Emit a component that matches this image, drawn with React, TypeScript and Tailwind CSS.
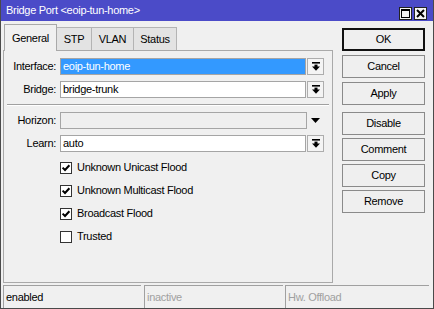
import React from "react";

const DropIcon = () => (
  <svg width="8" height="9" viewBox="0 0 8 9">
    <rect x="0" y="0" width="8" height="1.6" fill="#000" />
    <rect x="2.5" y="2.6" width="3" height="2.4" fill="#000" />
    <path d="M0 4.6 H8 L4 8.8 Z" fill="#000" />
  </svg>
);

const Check = () => (
  <svg width="10" height="10" viewBox="0 0 10 10">
    <path d="M1.6 4.6 L4 7 L8.4 2.2" stroke="#000" strokeWidth="2" fill="none" />
  </svg>
);

function Row({ label, children }: { label: string; children: React.ReactNode }) {
  return (
    <div className="flex items-center h-[17px]">
      <div className="w-[52px] text-right mr-[4px] leading-none">{label}</div>
      {children}
    </div>
  );
}

function Field({ value, selected }: { value: string; selected?: boolean }) {
  return (
    <>
      <div
        className={
          "w-[246px] h-[17px] border border-[#a5a5a5] flex items-center pl-[2px] leading-none " +
          (selected ? "bg-[#3399ff] text-white" : "bg-white")
        }
      >
        {value}
      </div>
      <div className="ml-[1px] w-[17px] h-[17px] border border-[#adadad] bg-[#f4f4f4] flex items-center justify-center">
        <DropIcon />
      </div>
    </>
  );
}

function CheckRow({ label, checked }: { label: string; checked: boolean }) {
  return (
    <div className="flex items-center h-[23px] pl-[56px]">
      <div className="w-[12px] h-[12px] border border-[#333] bg-white flex items-center justify-center">
        {checked && <Check />}
      </div>
      <span className="ml-[5px] leading-none">{label}</span>
    </div>
  );
}

function Btn({ label, def, className }: { label: string; def?: boolean; className?: string }) {
  return (
    <div
      className={
        "h-[23px] w-[83px] flex items-center justify-center bg-[#efefef] " +
        (def ? "border-2 border-[#111] " : "border border-[#8a8a8a] ") +
        (className ?? "")
      }
    >
      {label}
    </div>
  );
}

export default function App() {
  return (
    <div className="w-[434px] h-[309px] bg-[#f0f0f0] border-x border-b border-[#4a4a4a] flex flex-col font-['Liberation_Sans',Arial,sans-serif] text-[11px] tracking-[-0.3px] text-black overflow-hidden">
      {/* title bar */}
      <div className="h-[21px] bg-[#4b4bc8] flex items-end pl-[5px] pr-[6px] pb-[1px] text-white shrink-0">
        <span className="flex-1 self-center leading-none pt-[1px]">Bridge Port &lt;eoip-tun-home&gt;</span>
        <div className="w-[13px] h-[13px] bg-[#f4f4f4] border border-[#222] flex items-center justify-center">
          <svg width="9" height="9" viewBox="0 0 9 9">
            <rect x="0.5" y="0.5" width="8" height="8" fill="none" stroke="#000" strokeWidth="1" />
            <rect x="0" y="0" width="9" height="2" fill="#000" />
          </svg>
        </div>
        <div className="ml-[2px] w-[13px] h-[13px] bg-[#f4f4f4] border border-[#222] flex items-center justify-center">
          <svg width="9" height="9" viewBox="0 0 9 9">
            <path d="M1 1 L8 8 M8 1 L1 8" stroke="#000" strokeWidth="2" />
          </svg>
        </div>
      </div>

      <div className="flex">
        {/* left column */}
        <div className="ml-[2px] w-[330px] flex flex-col mt-[3px]">
          <div className="h-[26px] flex items-end pl-[1px]">
            <div className="relative z-10 w-[53px] h-[27px] -mb-px border border-b-0 border-[#a9a9a9] bg-[#f0f0f0] flex items-center justify-center">
              General
            </div>
            <div className="w-[35px] h-[23px] border border-b-0 border-l-0 border-[#b4b4b4] bg-[#e3e3e3] flex items-center justify-center">
              STP
            </div>
            <div className="w-[42px] h-[23px] border border-b-0 border-l-0 border-[#b4b4b4] bg-[#e3e3e3] flex items-center justify-center">
              VLAN
            </div>
            <div className="w-[43px] h-[23px] border border-b-0 border-l-0 border-[#b4b4b4] bg-[#e3e3e3] flex items-center justify-center">
              Status
            </div>
          </div>
          <div className="h-[233px] border border-[#a9a9a9] flex flex-col pt-[7px]">
            <Row label="Interface:">
              <Field value="eoip-tun-home" selected />
            </Row>
            <div className="mt-[6px]">
              <Row label="Bridge:">
                <Field value="bridge-trunk" />
              </Row>
            </div>
            <div className="mt-[6px] mx-[3px] h-[2px] border-t border-[#a0a0a0] border-b border-b-white" />
            <div className="mt-[6px]">
              <Row label="Horizon:">
                <div className="w-[247px] h-[17px] border border-[#a5a5a5] bg-[#efefef]" />
                <div className="w-[17px] h-[17px] flex items-center justify-center">
                  <svg width="9" height="5" viewBox="0 0 9 5">
                    <path d="M0 0 H9 L4.5 5 Z" fill="#000" />
                  </svg>
                </div>
              </Row>
            </div>
            <div className="mt-[6px]">
              <Row label="Learn:">
                <Field value="auto" />
              </Row>
            </div>
            <div className="mt-[4px] flex flex-col">
              <CheckRow label="Unknown Unicast Flood" checked />
              <CheckRow label="Unknown Multicast Flood" checked />
              <CheckRow label="Broadcast Flood" checked />
              <CheckRow label="Trusted" checked={false} />
            </div>
          </div>
        </div>

        {/* right column */}
        <div className="ml-[9px] mt-[7px] flex flex-col">
          <Btn label="OK" def />
          <Btn label="Cancel" className="mt-[4px]" />
          <Btn label="Apply" className="mt-[4px]" />
          <Btn label="Disable" className="mt-[7px]" />
          <Btn label="Comment" className="mt-[3px]" />
          <Btn label="Copy" className="mt-[3px]" />
          <Btn label="Remove" className="mt-[3px]" />
        </div>
      </div>

      {/* status bar */}
      <div className="mt-[2px] h-[23px] flex pl-[2px]">
        <div className="w-[138px] border-t border-l border-[#a0a0a0] flex items-center pl-[2px]">enabled</div>
        <div className="ml-[3px] w-[139px] border-t border-l border-[#a0a0a0] flex items-center pl-[2px] text-[#a0a0a0]">inactive</div>
        <div className="ml-[2px] w-[144px] border-t border-l border-[#a0a0a0] flex items-center pl-[2px] text-[#a0a0a0]">Hw. Offload</div>
      </div>
    </div>
  );
}
